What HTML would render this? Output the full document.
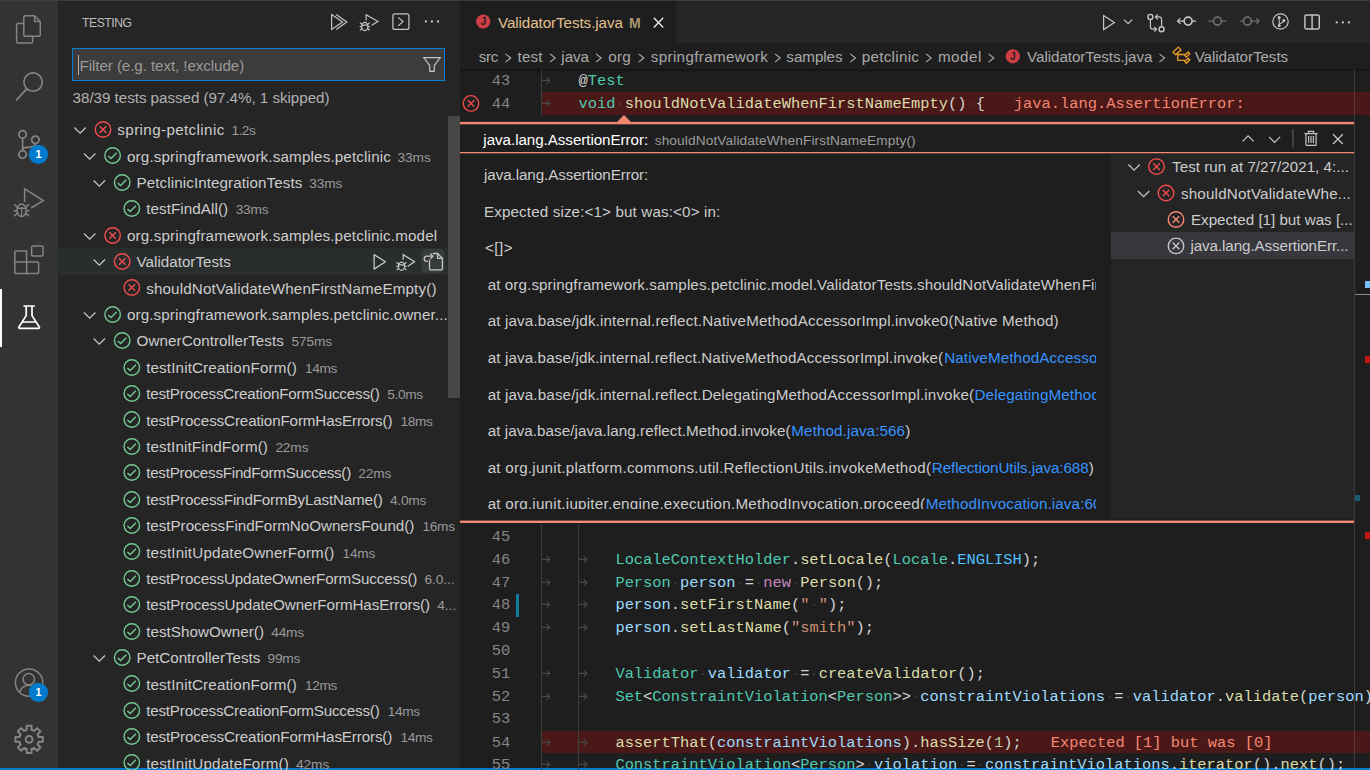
<!DOCTYPE html><html><head><meta charset="utf-8"><title>ValidatorTests.java - spring-petclinic - Visual Studio Code</title>
<style>
html,body{margin:0;padding:0}
body{width:1370px;height:770px;overflow:hidden;background:#1e1e1e;position:relative;font-family:"Liberation Sans",sans-serif}
.b{position:absolute}
.t{position:absolute;white-space:pre}
.cl{position:absolute;left:541.5px;height:22.8px;line-height:22.8px;white-space:pre;font-family:"Liberation Mono",monospace;font-size:15.4px;color:#d4d4d4}
.ln{position:absolute;left:470px;width:40.2px;text-align:right;height:22.8px;line-height:22.8px;font-family:"Liberation Mono",monospace;font-size:15.4px;color:#858585}
.ty{color:#4ec9b0}.va{color:#9cdcfe}.fn{color:#dcdcaa}.kw{color:#c586c0}.st{color:#ce9178}.nu{color:#b5cea8}.co{color:#4fc1ff}.ws{color:#e3e4e229}.er{color:#f48771;margin-left:1.2px}
svg{position:absolute;left:0;top:0}
</style></head><body>
<div class="b" style="left:0px;top:0px;width:1370px;height:1px;background:#3c3c3c;"></div>
<div class="b" style="left:0px;top:1px;width:58px;height:767px;background:#333333;"></div>
<div class="b" style="left:58px;top:1px;width:402px;height:767px;background:#252526;"></div>
<div class="b" style="left:460px;top:1px;width:910px;height:42px;background:#252526;"></div>
<div class="b" style="left:460px;top:1px;width:216.4px;height:42px;background:#1e1e1e;"></div>
<div class="b" style="left:0px;top:768px;width:1370px;height:2px;background:#007acc;"></div>
<div class="b" style="left:0px;top:288.5px;width:2.2px;height:58px;background:#ffffff;"></div>
<div class="b" style="left:72px;top:48px;width:373px;height:33px;background:#3c3c3c;box-sizing:border-box;border:1px solid #007fd4"></div>
<div class="b" style="left:77.6px;top:54.5px;width:1.2px;height:20.5px;background:#aeafad;"></div>
<div class="b" style="left:448px;top:115.8px;width:12px;height:282px;background:#474748;"></div>
<div class="b" style="left:58px;top:248px;width:390px;height:27.4px;background:#2a2d2e;"></div>
<div class="b" style="left:420.8px;top:248.8px;width:24.2px;height:24px;background:#383b3c;border-radius:5.5px"></div>
<div class="b" style="left:541px;top:92.0px;width:829px;height:22.9px;background:#4b1818;"></div>
<div class="b" style="left:541px;top:731.0px;width:829px;height:21.8px;background:#4b1818;"></div>
<div class="b" style="left:541px;top:69.2px;width:1px;height:45.8px;background:#3e3e3e;"></div>
<div class="b" style="left:541px;top:525.4px;width:1px;height:244.60000000000002px;background:#3e3e3e;"></div>
<div class="b" style="left:578px;top:525.4px;width:1px;height:244.60000000000002px;background:#3e3e3e;"></div>
<div class="b" style="left:516.3px;top:594.4px;width:3.0px;height:22.4px;background:#0c7d9d;"></div>
<div class="b" style="left:460px;top:69px;width:910px;height:5px;background:linear-gradient(rgba(0,0,0,.42),rgba(0,0,0,.14) 40%,rgba(0,0,0,0));"></div>
<div class="ln" style="top:526.00px">45</div>
<div class="ln" style="top:640.00px">50</div>
<div class="ln" style="top:708.00px">53</div>
<div class="ln" style="top:70.00px">43</div>
<div class="cl" style="top:70.00px">    @<span class="ty">Test</span></div>
<div class="ln" style="top:93.00px">44</div>
<div class="cl" style="top:93.00px">    <span class="ty">void</span><span class="ws">·</span><span class="fn">shouldNotValidateWhenFirstNameEmpty</span>()<span class="ws">·</span>{   <span class="er">java.lang.AssertionError:</span></div>
<div class="ln" style="top:549.00px">46</div>
<div class="cl" style="top:549.00px">        <span class="ty">LocaleContextHolder</span>.<span class="fn">setLocale</span>(<span class="ty">Locale</span>.<span class="co">ENGLISH</span>);</div>
<div class="ln" style="top:572.00px">47</div>
<div class="cl" style="top:572.00px">        <span class="ty">Person</span><span class="ws">·</span><span class="va">person</span><span class="ws">·</span>=<span class="ws">·</span><span class="kw">new</span><span class="ws">·</span><span class="fn">Person</span>();</div>
<div class="ln" style="top:594.00px">48</div>
<div class="cl" style="top:594.00px">        <span class="va">person</span>.<span class="fn">setFirstName</span>(<span class="st">&quot;</span><span class="ws">·</span><span class="st">&quot;</span>);</div>
<div class="ln" style="top:617.00px">49</div>
<div class="cl" style="top:617.00px">        <span class="va">person</span>.<span class="fn">setLastName</span>(<span class="st">&quot;smith&quot;</span>);</div>
<div class="ln" style="top:663.00px">51</div>
<div class="cl" style="top:663.00px">        <span class="ty">Validator</span><span class="ws">·</span><span class="va">validator</span><span class="ws">·</span>=<span class="ws">·</span><span class="fn">createValidator</span>();</div>
<div class="ln" style="top:686.00px">52</div>
<div class="cl" style="top:686.00px">        <span class="ty">Set</span>&lt;<span class="ty">ConstraintViolation</span>&lt;<span class="ty">Person</span>&gt;&gt;<span class="ws">·</span><span class="va">constraintViolations</span><span class="ws">·</span>=<span class="ws">·</span><span class="va">validator</span>.<span class="fn">validate</span>(<span class="va">person</span>);</div>
<div class="ln" style="top:732.00px">54</div>
<div class="cl" style="top:732.00px">        <span class="fn">assertThat</span>(<span class="va">constraintViolations</span>).<span class="fn">hasSize</span>(<span class="nu">1</span>);   <span class="er">Expected [1] but was [0]</span></div>
<div class="ln" style="top:754.00px">55</div>
<div class="cl" style="top:754.00px">        <span class="ty">ConstraintViolation</span>&lt;<span class="ty">Person</span>&gt;<span class="ws">·</span><span class="va">violation</span><span class="ws">·</span>=<span class="ws">·</span><span class="va">constraintViolations</span>.<span class="fn">iterator</span>().<span class="fn">next</span>();</div>
<div class="b" style="left:460px;top:122px;width:894px;height:401px;background:#1e1e1e;"></div>
<div class="b" style="left:1110.7px;top:153.6px;width:243.3px;height:365.1px;background:#252526;"></div>
<div class="b" style="left:1110.6px;top:232.2px;width:243.4px;height:26.4px;background:#37373d;"></div>
<div class="b" style="left:1354px;top:69px;width:1px;height:699px;background:rgba(127,127,127,0.3);"></div>
<div class="b" style="left:1365px;top:281px;width:5px;height:7.3px;background:#75beff;"></div>
<div class="b" style="left:1355.2px;top:293.6px;width:14.8px;height:1.6px;background:#8c8c8c;"></div>
<div class="b" style="left:1365px;top:356.2px;width:5px;height:7.3px;background:#c01515;"></div>
<div class="b" style="left:1355.2px;top:494.6px;width:4.9px;height:6.2px;background:#175a72;"></div>
<div class="b" style="left:1365px;top:532.4px;width:5px;height:6.8px;background:#c01515;"></div>
<span class="t" style="left:82.12px;top:14.00px;font-size:12.2px;line-height:18.3px;color:#bbbbbb;letter-spacing:-0.480px;">TESTING</span>
<span class="t" style="left:79.57px;top:55.00px;font-size:15.2px;line-height:22.8px;color:#9a9a9a;letter-spacing:-0.092px;">Filter (e.g. text, !exclude)</span>
<span class="t" style="left:72.57px;top:87.00px;font-size:15.2px;line-height:22.8px;color:#b0b0b0;letter-spacing:-0.038px;">38/39 tests passed (97.4%, 1 skipped)</span>
<span class="t" style="left:117.37px;top:119.00px;font-size:15.2px;line-height:22.8px;color:#cccccc;letter-spacing:0.372px;">spring-petclinic</span>
<span class="t" style="left:231.39px;top:121.00px;font-size:13.7px;line-height:20.5px;color:#9a9a9a;letter-spacing:-0.466px;">1.2s</span>
<span class="t" style="left:126.97px;top:146.00px;font-size:15.2px;line-height:22.8px;color:#cccccc;letter-spacing:0.156px;">org.springframework.samples.petclinic</span>
<span class="t" style="left:397.39px;top:148.00px;font-size:13.7px;line-height:20.5px;color:#9a9a9a;letter-spacing:0.007px;">33ms</span>
<span class="t" style="left:136.57px;top:172.00px;font-size:15.2px;line-height:22.8px;color:#cccccc;letter-spacing:0.087px;">PetclinicIntegrationTests</span>
<span class="t" style="left:309.19px;top:174.00px;font-size:13.7px;line-height:20.5px;color:#9a9a9a;letter-spacing:-0.068px;">33ms</span>
<span class="t" style="left:146.17px;top:198.00px;font-size:15.2px;line-height:22.8px;color:#cccccc;letter-spacing:0.079px;">testFindAll()</span>
<span class="t" style="left:235.69px;top:200.00px;font-size:13.7px;line-height:20.5px;color:#9a9a9a;letter-spacing:-0.193px;">33ms</span>
<span class="t" style="left:126.97px;top:225.00px;font-size:15.2px;line-height:22.8px;color:#cccccc;letter-spacing:0.151px;">org.springframework.samples.petclinic.model</span>
<span class="t" style="left:136.57px;top:251.00px;font-size:15.2px;line-height:22.8px;color:#cccccc;letter-spacing:0.006px;">ValidatorTests</span>
<span class="t" style="left:146.17px;top:278.00px;font-size:15.2px;line-height:22.8px;color:#cccccc;letter-spacing:0.147px;">shouldNotValidateWhenFirstNameEmpty()</span>
<span class="t" style="left:126.97px;top:304.00px;font-size:15.2px;line-height:22.8px;color:#cccccc;letter-spacing:0.112px;">org.springframework.samples.petclinic.owner...</span>
<span class="t" style="left:136.57px;top:330.00px;font-size:15.2px;line-height:22.8px;color:#cccccc;letter-spacing:0.067px;">OwnerControllerTests</span>
<span class="t" style="left:291.49px;top:332.00px;font-size:13.7px;line-height:20.5px;color:#9a9a9a;letter-spacing:-0.097px;">575ms</span>
<span class="t" style="left:146.17px;top:357.00px;font-size:15.2px;line-height:22.8px;color:#cccccc;letter-spacing:0.139px;">testInitCreationForm()</span>
<span class="t" style="left:304.99px;top:359.00px;font-size:13.7px;line-height:20.5px;color:#9a9a9a;letter-spacing:-0.343px;">14ms</span>
<span class="t" style="left:146.17px;top:383.00px;font-size:15.2px;line-height:22.8px;color:#cccccc;letter-spacing:-0.198px;">testProcessCreationFormSuccess()</span>
<span class="t" style="left:387.19px;top:385.00px;font-size:13.7px;line-height:20.5px;color:#9a9a9a;letter-spacing:-0.334px;">5.0ms</span>
<span class="t" style="left:146.17px;top:410.00px;font-size:15.2px;line-height:22.8px;color:#cccccc;letter-spacing:-0.129px;">testProcessCreationFormHasErrors()</span>
<span class="t" style="left:400.39px;top:412.00px;font-size:13.7px;line-height:20.5px;color:#9a9a9a;letter-spacing:-0.318px;">18ms</span>
<span class="t" style="left:146.17px;top:436.00px;font-size:15.2px;line-height:22.8px;color:#cccccc;letter-spacing:0.112px;">testInitFindForm()</span>
<span class="t" style="left:275.39px;top:438.00px;font-size:13.7px;line-height:20.5px;color:#9a9a9a;letter-spacing:-0.118px;">22ms</span>
<span class="t" style="left:146.17px;top:462.00px;font-size:15.2px;line-height:22.8px;color:#cccccc;letter-spacing:-0.250px;">testProcessFindFormSuccess()</span>
<span class="t" style="left:358.19px;top:464.00px;font-size:13.7px;line-height:20.5px;color:#9a9a9a;letter-spacing:-0.118px;">22ms</span>
<span class="t" style="left:146.17px;top:489.00px;font-size:15.2px;line-height:22.8px;color:#cccccc;letter-spacing:-0.156px;">testProcessFindFormByLastName()</span>
<span class="t" style="left:389.89px;top:491.00px;font-size:13.7px;line-height:20.5px;color:#9a9a9a;letter-spacing:-0.194px;">4.0ms</span>
<span class="t" style="left:146.17px;top:515.00px;font-size:15.2px;line-height:22.8px;color:#cccccc;letter-spacing:-0.032px;">testProcessFindFormNoOwnersFound()</span>
<span class="t" style="left:422.39px;top:517.00px;font-size:13.7px;line-height:20.5px;color:#9a9a9a;letter-spacing:-0.243px;">16ms</span>
<span class="t" style="left:146.17px;top:542.00px;font-size:15.2px;line-height:22.8px;color:#cccccc;letter-spacing:0.170px;">testInitUpdateOwnerForm()</span>
<span class="t" style="left:342.59px;top:544.00px;font-size:13.7px;line-height:20.5px;color:#9a9a9a;letter-spacing:-0.268px;">14ms</span>
<span class="t" style="left:146.17px;top:568.00px;font-size:15.2px;line-height:22.8px;color:#cccccc;letter-spacing:-0.141px;">testProcessUpdateOwnerFormSuccess()</span>
<span class="t" style="left:424.59px;top:570.00px;font-size:13.7px;line-height:20.5px;color:#9a9a9a;letter-spacing:-0.088px;">6.0...</span>
<span class="t" style="left:146.17px;top:594.00px;font-size:15.2px;line-height:22.8px;color:#cccccc;letter-spacing:-0.084px;">testProcessUpdateOwnerFormHasErrors()</span>
<span class="t" style="left:437.19px;top:596.00px;font-size:13.7px;line-height:20.5px;color:#9a9a9a;letter-spacing:-0.005px;">4...</span>
<span class="t" style="left:146.17px;top:621.00px;font-size:15.2px;line-height:22.8px;color:#cccccc;letter-spacing:0.035px;">testShowOwner()</span>
<span class="t" style="left:271.19px;top:623.00px;font-size:13.7px;line-height:20.5px;color:#9a9a9a;letter-spacing:-0.168px;">44ms</span>
<span class="t" style="left:136.57px;top:647.00px;font-size:15.2px;line-height:22.8px;color:#cccccc;letter-spacing:-0.019px;">PetControllerTests</span>
<span class="t" style="left:267.59px;top:649.00px;font-size:13.7px;line-height:20.5px;color:#9a9a9a;letter-spacing:-0.268px;">99ms</span>
<span class="t" style="left:146.17px;top:674.00px;font-size:15.2px;line-height:22.8px;color:#cccccc;letter-spacing:0.139px;">testInitCreationForm()</span>
<span class="t" style="left:304.99px;top:676.00px;font-size:13.7px;line-height:20.5px;color:#9a9a9a;letter-spacing:-0.343px;">12ms</span>
<span class="t" style="left:146.17px;top:700.00px;font-size:15.2px;line-height:22.8px;color:#cccccc;letter-spacing:-0.198px;">testProcessCreationFormSuccess()</span>
<span class="t" style="left:387.69px;top:702.00px;font-size:13.7px;line-height:20.5px;color:#9a9a9a;letter-spacing:-0.368px;">14ms</span>
<span class="t" style="left:146.17px;top:726.00px;font-size:15.2px;line-height:22.8px;color:#cccccc;letter-spacing:-0.135px;">testProcessCreationFormHasErrors()</span>
<span class="t" style="left:400.49px;top:728.00px;font-size:13.7px;line-height:20.5px;color:#9a9a9a;letter-spacing:-0.368px;">14ms</span>
<span class="t" style="left:146.17px;top:753.00px;font-size:15.2px;line-height:22.8px;color:#cccccc;letter-spacing:0.180px;">testInitUpdateForm()</span>
<span class="t" style="left:296.09px;top:755.00px;font-size:13.7px;line-height:20.5px;color:#9a9a9a;letter-spacing:-0.093px;">42ms</span>
<span class="t" style="left:497.97px;top:12.00px;font-size:15.2px;line-height:22.8px;color:#e2c08d;letter-spacing:-0.078px;">ValidatorTests.java</span>
<span class="t" style="left:629.09px;top:13.00px;font-size:14.0px;line-height:21.0px;color:#a8956f;font-weight:bold;letter-spacing:0.648px;">M</span>
<span class="t" style="left:478.67px;top:46.00px;font-size:15.2px;line-height:22.8px;color:#a9a9a9;letter-spacing:-0.331px;">src</span>
<span class="t" style="left:517.57px;top:46.00px;font-size:15.2px;line-height:22.8px;color:#a9a9a9;letter-spacing:0.118px;">test</span>
<span class="t" style="left:561.37px;top:46.00px;font-size:15.2px;line-height:22.8px;color:#a9a9a9;letter-spacing:-0.055px;">java</span>
<span class="t" style="left:608.37px;top:46.00px;font-size:15.2px;line-height:22.8px;color:#a9a9a9;letter-spacing:0.234px;">org</span>
<span class="t" style="left:650.77px;top:46.00px;font-size:15.2px;line-height:22.8px;color:#a9a9a9;letter-spacing:0.346px;">springframework</span>
<span class="t" style="left:786.37px;top:46.00px;font-size:15.2px;line-height:22.8px;color:#a9a9a9;letter-spacing:-0.058px;">samples</span>
<span class="t" style="left:861.77px;top:46.00px;font-size:15.2px;line-height:22.8px;color:#a9a9a9;letter-spacing:0.287px;">petclinic</span>
<span class="t" style="left:937.97px;top:46.00px;font-size:15.2px;line-height:22.8px;color:#a9a9a9;letter-spacing:0.496px;">model</span>
<span class="t" style="left:1027.07px;top:46.00px;font-size:15.2px;line-height:22.8px;color:#a9a9a9;letter-spacing:-0.057px;">ValidatorTests.java</span>
<span class="t" style="left:1194.67px;top:46.00px;font-size:15.2px;line-height:22.8px;color:#a9a9a9;letter-spacing:-0.058px;">ValidatorTests</span>
<span class="t" style="left:483.37px;top:129.00px;font-size:15.2px;line-height:22.8px;color:#ffffff;letter-spacing:-0.062px;">java.lang.AssertionError:</span>
<span class="t" style="left:654.69px;top:131.00px;font-size:13.7px;line-height:20.5px;color:#9d9d9d;letter-spacing:0.114px;">shouldNotValidateWhenFirstNameEmpty()</span>
<span class="t" style="left:483.97px;top:164.00px;font-size:15.2px;line-height:22.8px;color:#cccccc;letter-spacing:-0.082px;">java.lang.AssertionError:</span>
<span class="t" style="left:483.97px;top:201.00px;font-size:15.2px;line-height:22.8px;color:#cccccc;letter-spacing:0.129px;">Expected size:&lt;1&gt; but was:&lt;0&gt; in:</span>
<span class="t" style="left:484.97px;top:237.00px;font-size:15.2px;line-height:22.8px;color:#cccccc;letter-spacing:0.517px;">&lt;[]&gt;</span>
<span class="t" style="left:1172.07px;top:156.00px;font-size:15.2px;line-height:22.8px;color:#cccccc;letter-spacing:0.017px;">Test run at 7/27/2021, 4:...</span>
<span class="t" style="left:1180.97px;top:183.00px;font-size:15.2px;line-height:22.8px;color:#cccccc;letter-spacing:0.171px;">shouldNotValidateWhe...</span>
<span class="t" style="left:1190.97px;top:209.00px;font-size:15.2px;line-height:22.8px;color:#cccccc;letter-spacing:-0.014px;">Expected [1] but was [...</span>
<span class="t" style="left:1190.47px;top:235.00px;font-size:15.2px;line-height:22.8px;color:#cccccc;letter-spacing:-0.097px;">java.lang.AssertionErr...</span>
<div class="b" style="left:0;top:0;width:1096.3px;height:509px;overflow:hidden">
<span class="t" style="left:487.67px;top:274.00px;font-size:15.2px;line-height:22.8px;color:#cccccc;letter-spacing:0.095px;">at org.springframework.samples.petclinic.model.ValidatorTests.shouldNotValidateWhen</span>
<span class="t" style="left:1081.67px;top:274.00px;font-size:15.2px;line-height:22.8px;color:#cccccc;letter-spacing:0.150px;">FirstNameEmpty(</span>
<span class="t" style="left:487.67px;top:310.00px;font-size:15.2px;line-height:22.8px;color:#cccccc;letter-spacing:0.152px;">at java.base/jdk.internal.reflect.NativeMethodAccessorImpl.invoke0(Native Method)</span>
<span class="t" style="left:487.67px;top:347.00px;font-size:15.2px;line-height:22.8px;color:#cccccc;letter-spacing:0.125px;">at java.base/jdk.internal.reflect.NativeMethodAccessorImpl.invoke(</span>
<span class="t" style="left:944.17px;top:347.00px;font-size:15.2px;line-height:22.8px;color:#3794ff;letter-spacing:0.120px;">NativeMethodAccessorImpl.java:62</span>
<span class="t" style="left:487.67px;top:384.00px;font-size:15.2px;line-height:22.8px;color:#cccccc;letter-spacing:0.137px;">at java.base/jdk.internal.reflect.DelegatingMethodAccessorImpl.invoke(</span>
<span class="t" style="left:974.47px;top:384.00px;font-size:15.2px;line-height:22.8px;color:#3794ff;letter-spacing:0.140px;">DelegatingMethodAccessorImpl.java:43</span>
<span class="t" style="left:487.67px;top:420.00px;font-size:15.2px;line-height:22.8px;color:#cccccc;letter-spacing:0.054px;">at java.base/java.lang.reflect.Method.invoke(</span>
<span class="t" style="left:791.37px;top:420.00px;font-size:15.2px;line-height:22.8px;color:#3794ff;letter-spacing:0.096px;">Method.java:566</span>
<span class="t" style="left:905.17px;top:420.00px;font-size:15.2px;line-height:22.8px;color:#cccccc;letter-spacing:-0.707px;">)</span>
<span class="t" style="left:487.67px;top:457.00px;font-size:15.2px;line-height:22.8px;color:#cccccc;letter-spacing:0.230px;">at org.junit.platform.commons.util.ReflectionUtils.invokeMethod(</span>
<span class="t" style="left:931.77px;top:457.00px;font-size:15.2px;line-height:22.8px;color:#3794ff;letter-spacing:-0.082px;">ReflectionUtils.java:688</span>
<span class="t" style="left:1088.67px;top:457.00px;font-size:15.2px;line-height:22.8px;color:#cccccc;letter-spacing:-0.607px;">)</span>
<span class="t" style="left:487.67px;top:493.00px;font-size:15.2px;line-height:22.8px;color:#cccccc;letter-spacing:0.231px;">at org.junit.jupiter.engine.execution.MethodInvocation.proceed(</span>
<span class="t" style="left:925.67px;top:493.00px;font-size:15.2px;line-height:22.8px;color:#3794ff;letter-spacing:0.120px;">MethodInvocation.java:60</span>
</div>
<svg width="1370" height="770" viewBox="0 0 1370 770" style="pointer-events:none"><path d="M74.4,127.5 L80.1,133.2 L85.8,127.5" stroke="#c5c5c5" stroke-width="1.3" fill="none"/>
<circle cx="103.0" cy="129.5" r="7.75" stroke="#f14c4c" stroke-width="1.4" fill="none"/>
<path d="M99.7,126.2 L106.3,132.8 M106.3,126.2 L99.7,132.8" stroke="#f14c4c" stroke-width="1.4" fill="none"/>
<path d="M84.0,153.5 L89.7,159.2 L95.4,153.5" stroke="#c5c5c5" stroke-width="1.3" fill="none"/>
<circle cx="112.6" cy="155.5" r="7.75" stroke="#73c991" stroke-width="1.4" fill="none"/>
<path d="M108.2,155.9 L111.0,158.6 L116.7,152.8" stroke="#73c991" stroke-width="1.4" fill="none"/>
<path d="M93.6,180.5 L99.3,186.2 L105.0,180.5" stroke="#c5c5c5" stroke-width="1.3" fill="none"/>
<circle cx="122.2" cy="182.5" r="7.75" stroke="#73c991" stroke-width="1.4" fill="none"/>
<path d="M117.8,182.9 L120.6,185.6 L126.3,179.8" stroke="#73c991" stroke-width="1.4" fill="none"/>
<circle cx="131.8" cy="208.5" r="7.75" stroke="#73c991" stroke-width="1.4" fill="none"/>
<path d="M127.4,208.9 L130.2,211.6 L135.9,205.8" stroke="#73c991" stroke-width="1.4" fill="none"/>
<path d="M84.0,233.5 L89.7,239.2 L95.4,233.5" stroke="#c5c5c5" stroke-width="1.3" fill="none"/>
<circle cx="112.6" cy="235.5" r="7.75" stroke="#f14c4c" stroke-width="1.4" fill="none"/>
<path d="M109.3,232.2 L115.9,238.8 M115.9,232.2 L109.3,238.8" stroke="#f14c4c" stroke-width="1.4" fill="none"/>
<path d="M93.6,259.5 L99.3,265.2 L105.0,259.5" stroke="#c5c5c5" stroke-width="1.3" fill="none"/>
<circle cx="122.2" cy="261.5" r="7.75" stroke="#f14c4c" stroke-width="1.4" fill="none"/>
<path d="M118.9,258.2 L125.5,264.8 M125.5,258.2 L118.9,264.8" stroke="#f14c4c" stroke-width="1.4" fill="none"/>
<circle cx="131.8" cy="287.5" r="7.75" stroke="#f14c4c" stroke-width="1.4" fill="none"/>
<path d="M128.5,284.2 L135.1,290.8 M135.1,284.2 L128.5,290.8" stroke="#f14c4c" stroke-width="1.4" fill="none"/>
<path d="M84.0,312.5 L89.7,318.2 L95.4,312.5" stroke="#c5c5c5" stroke-width="1.3" fill="none"/>
<circle cx="112.6" cy="314.5" r="7.75" stroke="#73c991" stroke-width="1.4" fill="none"/>
<path d="M108.2,314.9 L111.0,317.6 L116.7,311.8" stroke="#73c991" stroke-width="1.4" fill="none"/>
<path d="M93.6,338.5 L99.3,344.2 L105.0,338.5" stroke="#c5c5c5" stroke-width="1.3" fill="none"/>
<circle cx="122.2" cy="340.5" r="7.75" stroke="#73c991" stroke-width="1.4" fill="none"/>
<path d="M117.8,340.9 L120.6,343.6 L126.3,337.8" stroke="#73c991" stroke-width="1.4" fill="none"/>
<circle cx="131.8" cy="367.5" r="7.75" stroke="#73c991" stroke-width="1.4" fill="none"/>
<path d="M127.4,367.9 L130.2,370.6 L135.9,364.8" stroke="#73c991" stroke-width="1.4" fill="none"/>
<circle cx="131.8" cy="393.5" r="7.75" stroke="#73c991" stroke-width="1.4" fill="none"/>
<path d="M127.4,393.9 L130.2,396.6 L135.9,390.8" stroke="#73c991" stroke-width="1.4" fill="none"/>
<circle cx="131.8" cy="419.5" r="7.75" stroke="#73c991" stroke-width="1.4" fill="none"/>
<path d="M127.4,419.9 L130.2,422.6 L135.9,416.8" stroke="#73c991" stroke-width="1.4" fill="none"/>
<circle cx="131.8" cy="446.5" r="7.75" stroke="#73c991" stroke-width="1.4" fill="none"/>
<path d="M127.4,446.9 L130.2,449.6 L135.9,443.8" stroke="#73c991" stroke-width="1.4" fill="none"/>
<circle cx="131.8" cy="472.5" r="7.75" stroke="#73c991" stroke-width="1.4" fill="none"/>
<path d="M127.4,472.9 L130.2,475.6 L135.9,469.8" stroke="#73c991" stroke-width="1.4" fill="none"/>
<circle cx="131.8" cy="499.5" r="7.75" stroke="#73c991" stroke-width="1.4" fill="none"/>
<path d="M127.4,499.9 L130.2,502.6 L135.9,496.8" stroke="#73c991" stroke-width="1.4" fill="none"/>
<circle cx="131.8" cy="525.5" r="7.75" stroke="#73c991" stroke-width="1.4" fill="none"/>
<path d="M127.4,525.9 L130.2,528.6 L135.9,522.8" stroke="#73c991" stroke-width="1.4" fill="none"/>
<circle cx="131.8" cy="551.5" r="7.75" stroke="#73c991" stroke-width="1.4" fill="none"/>
<path d="M127.4,551.9 L130.2,554.6 L135.9,548.8" stroke="#73c991" stroke-width="1.4" fill="none"/>
<circle cx="131.8" cy="578.5" r="7.75" stroke="#73c991" stroke-width="1.4" fill="none"/>
<path d="M127.4,578.9 L130.2,581.6 L135.9,575.8" stroke="#73c991" stroke-width="1.4" fill="none"/>
<circle cx="131.8" cy="604.5" r="7.75" stroke="#73c991" stroke-width="1.4" fill="none"/>
<path d="M127.4,604.9 L130.2,607.6 L135.9,601.8" stroke="#73c991" stroke-width="1.4" fill="none"/>
<circle cx="131.8" cy="631.5" r="7.75" stroke="#73c991" stroke-width="1.4" fill="none"/>
<path d="M127.4,631.9 L130.2,634.6 L135.9,628.8" stroke="#73c991" stroke-width="1.4" fill="none"/>
<path d="M93.6,655.5 L99.3,661.2 L105.0,655.5" stroke="#c5c5c5" stroke-width="1.3" fill="none"/>
<circle cx="122.2" cy="657.5" r="7.75" stroke="#73c991" stroke-width="1.4" fill="none"/>
<path d="M117.8,657.9 L120.6,660.6 L126.3,654.8" stroke="#73c991" stroke-width="1.4" fill="none"/>
<circle cx="131.8" cy="683.5" r="7.75" stroke="#73c991" stroke-width="1.4" fill="none"/>
<path d="M127.4,683.9 L130.2,686.6 L135.9,680.8" stroke="#73c991" stroke-width="1.4" fill="none"/>
<circle cx="131.8" cy="710.5" r="7.75" stroke="#73c991" stroke-width="1.4" fill="none"/>
<path d="M127.4,710.9 L130.2,713.6 L135.9,707.8" stroke="#73c991" stroke-width="1.4" fill="none"/>
<circle cx="131.8" cy="736.5" r="7.75" stroke="#73c991" stroke-width="1.4" fill="none"/>
<path d="M127.4,736.9 L130.2,739.6 L135.9,733.8" stroke="#73c991" stroke-width="1.4" fill="none"/>
<circle cx="131.8" cy="762.5" r="7.75" stroke="#73c991" stroke-width="1.4" fill="none"/>
<path d="M127.4,762.9 L130.2,765.6 L135.9,759.8" stroke="#73c991" stroke-width="1.4" fill="none"/>
<path d="M505.5,53.9 L510.7,58.0 L505.5,62.1" stroke="#a9a9a9" stroke-width="1.2" fill="none"/>
<path d="M550.0,53.9 L555.2,58.0 L550.0,62.1" stroke="#a9a9a9" stroke-width="1.2" fill="none"/>
<path d="M596.0,53.9 L601.2,58.0 L596.0,62.1" stroke="#a9a9a9" stroke-width="1.2" fill="none"/>
<path d="M638.6,53.9 L643.8,58.0 L638.6,62.1" stroke="#a9a9a9" stroke-width="1.2" fill="none"/>
<path d="M775.0,53.9 L780.2,58.0 L775.0,62.1" stroke="#a9a9a9" stroke-width="1.2" fill="none"/>
<path d="M850.2,53.9 L855.4,58.0 L850.2,62.1" stroke="#a9a9a9" stroke-width="1.2" fill="none"/>
<path d="M926.0,53.9 L931.2,58.0 L926.0,62.1" stroke="#a9a9a9" stroke-width="1.2" fill="none"/>
<path d="M988.6,53.9 L993.8,58.0 L988.6,62.1" stroke="#a9a9a9" stroke-width="1.2" fill="none"/>
<path d="M1159.4,53.9 L1164.6,58.0 L1159.4,62.1" stroke="#a9a9a9" stroke-width="1.2" fill="none"/>
<path d="M542.1,80.4 H549.9 M546.7,77.2 L549.9,80.4 L546.7,83.6" stroke="#484848" stroke-width="1.1" fill="none"/>
<path d="M542.1,103.4 H549.9 M546.7,100.2 L549.9,103.4 L546.7,106.6" stroke="#484848" stroke-width="1.1" fill="none"/>
<path d="M542.1,559.4 H549.9 M546.7,556.2 L549.9,559.4 L546.7,562.6" stroke="#484848" stroke-width="1.1" fill="none"/>
<path d="M579.1,559.4 H586.9 M583.7,556.2 L586.9,559.4 L583.7,562.6" stroke="#484848" stroke-width="1.1" fill="none"/>
<path d="M542.1,582.4 H549.9 M546.7,579.2 L549.9,582.4 L546.7,585.6" stroke="#484848" stroke-width="1.1" fill="none"/>
<path d="M579.1,582.4 H586.9 M583.7,579.2 L586.9,582.4 L583.7,585.6" stroke="#484848" stroke-width="1.1" fill="none"/>
<path d="M542.1,604.4 H549.9 M546.7,601.2 L549.9,604.4 L546.7,607.6" stroke="#484848" stroke-width="1.1" fill="none"/>
<path d="M579.1,604.4 H586.9 M583.7,601.2 L586.9,604.4 L583.7,607.6" stroke="#484848" stroke-width="1.1" fill="none"/>
<path d="M542.1,627.4 H549.9 M546.7,624.2 L549.9,627.4 L546.7,630.6" stroke="#484848" stroke-width="1.1" fill="none"/>
<path d="M579.1,627.4 H586.9 M583.7,624.2 L586.9,627.4 L583.7,630.6" stroke="#484848" stroke-width="1.1" fill="none"/>
<path d="M542.1,673.4 H549.9 M546.7,670.2 L549.9,673.4 L546.7,676.6" stroke="#484848" stroke-width="1.1" fill="none"/>
<path d="M579.1,673.4 H586.9 M583.7,670.2 L586.9,673.4 L583.7,676.6" stroke="#484848" stroke-width="1.1" fill="none"/>
<path d="M542.1,696.4 H549.9 M546.7,693.2 L549.9,696.4 L546.7,699.6" stroke="#484848" stroke-width="1.1" fill="none"/>
<path d="M579.1,696.4 H586.9 M583.7,693.2 L586.9,696.4 L583.7,699.6" stroke="#484848" stroke-width="1.1" fill="none"/>
<path d="M542.1,742.4 H549.9 M546.7,739.2 L549.9,742.4 L546.7,745.6" stroke="#484848" stroke-width="1.1" fill="none"/>
<path d="M579.1,742.4 H586.9 M583.7,739.2 L586.9,742.4 L583.7,745.6" stroke="#484848" stroke-width="1.1" fill="none"/>
<path d="M542.1,764.4 H549.9 M546.7,761.2 L549.9,764.4 L546.7,767.6" stroke="#484848" stroke-width="1.1" fill="none"/>
<path d="M579.1,764.4 H586.9 M583.7,761.2 L586.9,764.4 L583.7,767.6" stroke="#484848" stroke-width="1.1" fill="none"/>
<rect x="460" y="121.9" width="894" height="2.4" fill="#f48771"/>
<rect x="460" y="152" width="894" height="1.3" fill="#f48771"/>
<rect x="460" y="520.6" width="894" height="2.4" fill="#f48771"/>
<path d="M616.8,122.2 L624,115 L631.2,122.2 Z" fill="#f48771"/>
<path d="M1128.4,164.5 L1134.1,170.2 L1139.8,164.5" stroke="#c5c5c5" stroke-width="1.3" fill="none"/>
<circle cx="1156.5" cy="166.6" r="7.75" stroke="#f14c4c" stroke-width="1.4" fill="none"/>
<path d="M1153.2,163.3 L1159.8,169.9 M1159.8,163.3 L1153.2,169.9" stroke="#f14c4c" stroke-width="1.4" fill="none"/>
<path d="M1137.9,191.0 L1143.6,196.7 L1149.3,191.0" stroke="#c5c5c5" stroke-width="1.3" fill="none"/>
<circle cx="1166.0" cy="193.0" r="7.75" stroke="#f14c4c" stroke-width="1.4" fill="none"/>
<path d="M1162.7,189.7 L1169.3,196.3 M1169.3,189.7 L1162.7,196.3" stroke="#f14c4c" stroke-width="1.4" fill="none"/>
<circle cx="1176.0" cy="219.5" r="7.75" stroke="#f48771" stroke-width="1.4" fill="none"/>
<path d="M1172.7,216.2 L1179.3,222.8 M1179.3,216.2 L1172.7,222.8" stroke="#f48771" stroke-width="1.4" fill="none"/>
<circle cx="1176.0" cy="245.9" r="7.75" stroke="#c5c5c5" stroke-width="1.4" fill="none"/>
<path d="M1172.7,242.6 L1179.3,249.2 M1179.3,242.6 L1172.7,249.2" stroke="#c5c5c5" stroke-width="1.4" fill="none"/>
<circle cx="471.0" cy="103.4" r="7.75" stroke="#f14c4c" stroke-width="1.4" fill="none"/>
<path d="M467.7,100.1 L474.3,106.7 M474.3,100.1 L467.7,106.7" stroke="#f14c4c" stroke-width="1.4" fill="none"/>
<path d="M25,15.8 H34.6 L40.3,21.5 V35 a1.2,1.2 0 0 1 -1.2,1.2 H25 a1.2,1.2 0 0 1 -1.2,-1.2 V17 a1.2,1.2 0 0 1 1.2,-1.2 Z M34.6,15.8 V21.5 H40.3" stroke="#858585" stroke-width="1.5" fill="none" stroke-linejoin="round"/>
<path d="M23.8,23.4 H17.8 a1.2,1.2 0 0 0 -1.2,1.2 V41.8 a1.2,1.2 0 0 0 1.2,1.2 H31.4 a1.2,1.2 0 0 0 1.2,-1.2 V36.2" stroke="#858585" stroke-width="1.5" fill="none" />
<circle cx="33.1" cy="82.1" r="9.2" stroke="#858585" stroke-width="1.6" fill="none"/>
<path d="M26.6,88.9 L16.2,100.4" stroke="#858585" stroke-width="1.7" fill="none" />
<circle cx="22.6" cy="134.4" r="3.7" stroke="#858585" stroke-width="1.8" fill="none"/>
<circle cx="22.6" cy="154.4" r="3.7" stroke="#858585" stroke-width="1.8" fill="none"/>
<circle cx="35.4" cy="139.8" r="3.7" stroke="#858585" stroke-width="1.8" fill="none"/>
<path d="M22.6,138.2 V150.6 M35.4,143.5 C35.4,147 31.5,147.3 27.5,147.3 C25,147.3 23.4,147.9 22.6,149.2" stroke="#858585" stroke-width="1.7" fill="none" />
<circle cx="38.4" cy="154.4" r="9.6" stroke="none" stroke-width="0" fill="#007acc"/>
<text x="38.4" y="158.3" font-family="Liberation Sans, sans-serif" font-weight="bold" font-size="10.8" fill="#ffffff" text-anchor="middle">1</text>
<path d="M24.6,202 V188.8 L43.2,200.6 L31.2,208" stroke="#858585" stroke-width="1.5" fill="none" stroke-linejoin="miter"/>
<ellipse cx="21.6" cy="210.3" rx="4.62" ry="6.25" stroke="#858585" stroke-width="1.5" fill="none"/>
<path d="M17.4,207.3 L14.1,204.3 M25.9,207.3 L29.1,204.3 M17.4,213.3 L14.1,216.3 M25.9,213.3 L29.1,216.3 M17.0,210.7 H13.6 M26.2,210.7 H29.6 M17.4,208.3 H25.9" stroke="#858585" stroke-width="1.5" fill="none" />
<path d="M21.6,207 V216.4" stroke="#858585" stroke-width="1.2" fill="none" />
<path d="M15.6,250.9 H26.6 V262 H37.8 a0.8,0.8 0 0 1 0.8,0.8 V272.6 a0.8,0.8 0 0 1 -0.8,0.8 H15.6 a0.8,0.8 0 0 1 -0.8,-0.8 V251.7 a0.8,0.8 0 0 1 0.8,-0.8 Z M14.8,262 H26.6 V273.4" stroke="#858585" stroke-width="1.5" fill="none" />
<rect x="31.6" y="246" width="11.4" height="10" rx="1.2" stroke="#858585" stroke-width="1.5" fill="none"/>
<path d="M23.4,306 H34.9 M26.2,306 V315.6 L18.9,327 a0.9,0.9 0 0 0 0.8,1.4 H38.5 a0.9,0.9 0 0 0 0.8,-1.4 L32,315.6 V306 M22,322 H36.4" stroke="#ffffff" stroke-width="1.7" fill="none" />
<circle cx="29.1" cy="682.6" r="13.7" stroke="#858585" stroke-width="1.5" fill="none"/>
<circle cx="28.8" cy="679.2" r="5.7" stroke="#858585" stroke-width="1.5" fill="none"/>
<path d="M19.6,692.6 C21,687.6 24.5,685.2 28.9,685.2 C33.3,685.2 36.9,687.6 38.4,692.6" stroke="#858585" stroke-width="1.5" fill="none" />
<circle cx="38.4" cy="692.4" r="9.6" stroke="none" stroke-width="0" fill="#007acc"/>
<text x="38.4" y="696.3" font-family="Liberation Sans, sans-serif" font-weight="bold" font-size="10.8" fill="#ffffff" text-anchor="middle">1</text>
<path d="M26.7,729.8 L26.7,725.7 L31.5,725.7 L31.5,729.8 L34.2,730.9 L37.1,728.1 L40.4,731.4 L37.6,734.3 L38.7,737.0 L42.8,737.0 L42.8,741.8 L38.7,741.8 L37.6,744.5 L40.4,747.4 L37.1,750.7 L34.2,747.9 L31.5,749.0 L31.5,753.1 L26.7,753.1 L26.7,749.0 L24.0,747.9 L21.1,750.7 L17.8,747.4 L20.6,744.5 L19.5,741.8 L15.4,741.8 L15.4,737.0 L19.5,737.0 L20.6,734.3 L17.8,731.4 L21.1,728.1 L24.0,730.9 Z" stroke="#858585" stroke-width="2.0" fill="none" stroke-linejoin="round"/>
<circle cx="29.1" cy="739.4" r="3.4" stroke="#858585" stroke-width="2.0" fill="none"/>
<path d="M331.6,14.6 L342.6,22 L331.6,29.4 Z M336.2,14.6 L346.8,22 L336.2,29.4" stroke="#c5c5c5" stroke-width="1.2" fill="none" stroke-linejoin="miter"/>
<path d="M366.2,20.6 V14.8 L378,21.4 L371.6,25.2" stroke="#c5c5c5" stroke-width="1.2" fill="none" />
<ellipse cx="364.8" cy="26.5" rx="3.03" ry="4.10" stroke="#c5c5c5" stroke-width="1.2" fill="none"/>
<path d="M362.0,24.5 L359.9,22.6 M367.6,24.5 L369.7,22.6 M362.0,28.5 L359.9,30.4 M367.6,28.5 L369.7,30.4 M361.8,26.7 H359.6 M367.8,26.7 H370.0 M362.0,25.2 H367.6" stroke="#c5c5c5" stroke-width="1.2" fill="none" />
<rect x="392.9" y="13.8" width="16" height="15.6" rx="2" stroke="#c5c5c5" stroke-width="1.2" fill="none"/>
<path d="M398.2,17.4 L403,21.6 L398.2,25.8" stroke="#c5c5c5" stroke-width="1.2" fill="none" />
<circle cx="425.9" cy="21.5" r="1.15" stroke="none" stroke-width="0" fill="#c5c5c5"/>
<circle cx="431.9" cy="21.5" r="1.15" stroke="none" stroke-width="0" fill="#c5c5c5"/>
<circle cx="438.0" cy="21.5" r="1.15" stroke="none" stroke-width="0" fill="#c5c5c5"/>
<path d="M423.8,57.7 H440.2 L434.2,65.6 V71.4 H429.8 V65.6 Z" stroke="#c5c5c5" stroke-width="1.2" fill="none" stroke-linejoin="miter"/>
<path d="M374.1,254.6 L385.4,261.8 L374.1,269.1 Z" stroke="#c5c5c5" stroke-width="1.3" fill="none" stroke-linejoin="round"/>
<path d="M403.2,259.8 V254.6 L414.5,261.7 L407.8,266.2" stroke="#c5c5c5" stroke-width="1.3" fill="none" />
<ellipse cx="401.5" cy="266.2" rx="3.03" ry="4.10" stroke="#c5c5c5" stroke-width="1.2" fill="none"/>
<path d="M398.7,264.2 L396.6,262.3 M404.3,264.2 L406.4,262.3 M398.7,268.2 L396.6,270.1 M404.3,268.2 L406.4,270.1 M398.5,266.4 H396.3 M404.5,266.4 H406.7 M398.7,264.9 H404.3" stroke="#c5c5c5" stroke-width="1.2" fill="none" />
<path d="M432.9,253.5 H437.6 L442.4,258.3 V268.8 a1,1 0 0 1 -1,1 H430.5 a1,1 0 0 1 -1,-1 V259.8 M437.6,253.5 V258.3 H442.4" stroke="#c5c5c5" stroke-width="1.3" fill="none" />
<path d="M427.8,261.4 H426.8 a2.6,2.6 0 0 1 0,-5.2 H432.6 M430.3,253.5 L432.9,256.2 L430.3,258.9" stroke="#c5c5c5" stroke-width="1.3" fill="none" />
<circle cx="483.2" cy="21.6" r="7.1" stroke="none" stroke-width="0" fill="#cc3e44"/>
<text x="483.3" y="25.1" font-family="Liberation Sans, sans-serif" font-weight="bold" font-size="10.2" fill="#1e1e1e" text-anchor="middle">J</text>
<path d="M653.8,17.8 L663.2,27.4 M663.2,17.8 L653.8,27.4" stroke="#e8e8e8" stroke-width="1.4" fill="none" />
<circle cx="1012.8" cy="56.3" r="7.1" stroke="none" stroke-width="0" fill="#cc3e44"/>
<text x="1012.9" y="59.8" font-family="Liberation Sans, sans-serif" font-weight="bold" font-size="10.2" fill="#1e1e1e" text-anchor="middle">J</text>
<path d="M1178.3,47.1 L1181,49.9 L1175.6,54.8 L1172.9,52.3 Z M1177.8,53.4 V60.3 H1184.9 M1177.8,54.5 H1184.9 M1188.2,52 L1189.8,53.8 L1186.4,57 L1184.7,55.2 Z M1188.2,58.2 L1189.8,60 L1186.4,63.2 L1184.7,61.4 Z" stroke="#ee9d28" stroke-width="1.3" fill="none" stroke-linejoin="round"/>
<path d="M1103.6,15.6 L1114.4,22.6 L1103.6,29.6 Z" stroke="#c5c5c5" stroke-width="1.2" fill="none" />
<path d="M1124,19.6 L1128.1,23.7 L1132.2,19.6" stroke="#c5c5c5" stroke-width="1.2" fill="none" />
<circle cx="1150.4" cy="16.9" r="2.5" stroke="#c5c5c5" stroke-width="1.4" fill="none"/>
<circle cx="1161.6" cy="29.2" r="2.5" stroke="#c5c5c5" stroke-width="1.4" fill="none"/>
<path d="M1150.4,19.4 V26.6 a2.6,2.6 0 0 0 2.6,2.6 H1156.4 M1154.2,26.8 L1156.6,29.2 L1154.2,31.6" stroke="#c5c5c5" stroke-width="1.2" fill="none" />
<path d="M1161.6,26.7 V19.5 a2.6,2.6 0 0 0 -2.6,-2.6 H1155.6 M1157.8,14.5 L1155.4,16.9 L1157.8,19.3" stroke="#c5c5c5" stroke-width="1.2" fill="none" />
<circle cx="1188.1" cy="21.1" r="4.0" stroke="#c5c5c5" stroke-width="1.7" fill="none"/>
<path d="M1184,21.1 H1177.6 M1180.4,18.2 L1177.5,21.1 L1180.4,24 M1192.2,21.1 H1196" stroke="#c5c5c5" stroke-width="1.2" fill="none" />
<circle cx="1217.4" cy="21.1" r="4.0" stroke="#6e6e6e" stroke-width="1.7" fill="none"/>
<path d="M1208.4,21.1 H1213.3 M1221.5,21.1 H1226.6" stroke="#6e6e6e" stroke-width="1.2" fill="none" />
<circle cx="1247.4" cy="21.1" r="4.0" stroke="#6e6e6e" stroke-width="1.7" fill="none"/>
<path d="M1240.4,21.1 H1243.3 M1251.5,21.1 H1259 M1256.2,18.2 L1259.1,21.1 L1256.2,24" stroke="#6e6e6e" stroke-width="1.2" fill="none" />
<circle cx="1280.5" cy="21.5" r="7.7" stroke="#c5c5c5" stroke-width="1.2" fill="none"/>
<circle cx="1279.2" cy="17.6" r="1.5" stroke="none" stroke-width="0" fill="#c5c5c5"/>
<circle cx="1279.2" cy="25.6" r="1.5" stroke="none" stroke-width="0" fill="#c5c5c5"/>
<circle cx="1283.8" cy="20.6" r="1.5" stroke="none" stroke-width="0" fill="#c5c5c5"/>
<path d="M1279.2,17.6 V25.6 M1283.8,20.6 C1283.8,23 1281,23 1279.2,24" stroke="#c5c5c5" stroke-width="1.1" fill="none" />
<rect x="1304.9" y="15" width="14.4" height="14" rx="1.4" stroke="#c5c5c5" stroke-width="1.45" fill="none"/>
<path d="M1312.1,15 V29" stroke="#c5c5c5" stroke-width="1.45" fill="none" />
<circle cx="1336.7" cy="22.4" r="1.15" stroke="none" stroke-width="0" fill="#c5c5c5"/>
<circle cx="1342.8" cy="22.4" r="1.15" stroke="none" stroke-width="0" fill="#c5c5c5"/>
<circle cx="1348.9" cy="22.4" r="1.15" stroke="none" stroke-width="0" fill="#c5c5c5"/>
<path d="M1242.6,141.4 L1248.1,135.9 L1253.6,141.4" stroke="#c5c5c5" stroke-width="1.25" fill="none" />
<path d="M1269.1,136.9 L1274.6,142.4 L1280.1,136.9" stroke="#c5c5c5" stroke-width="1.25" fill="none" />
<rect x="1292.3" y="129.2" width="1.2" height="18.2" fill="#5a5a5a"/>
<path d="M1304.4,133.6 H1317.6 M1308.4,133.4 V131.4 H1313.6 V133.4 M1305.9,133.6 V144.4 a1,1 0 0 0 1,1 H1315.1 a1,1 0 0 0 1,-1 V133.6 M1308.6,136 V143 M1311,136 V143 M1313.4,136 V143" stroke="#c5c5c5" stroke-width="1.2" fill="none" />
<path d="M1333,134.2 L1342.8,144 M1342.8,134.2 L1333,144" stroke="#c5c5c5" stroke-width="1.3" fill="none" /></svg>
</body></html>
